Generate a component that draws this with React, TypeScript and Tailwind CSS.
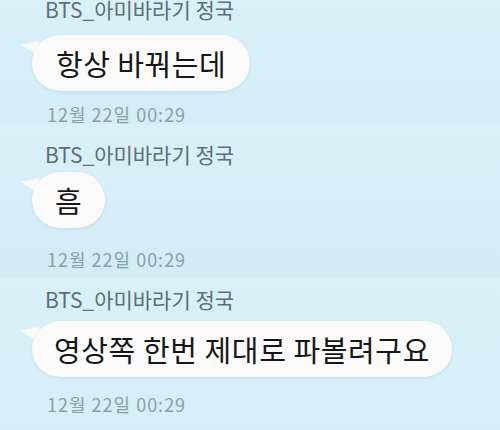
const name = "BTS_아미바라기 정국"
const time = "12월 22일 00:29"

function Bubble({ text, px = "px-[24px]" }: { text: string; px?: string }) {
  return (
    <div className="relative ml-[32px] inline-flex">
      <svg
        className="absolute left-[-13px] top-[6px]"
        width="22"
        height="20"
        viewBox="0 0 22 20"
      >
        <path d="M0 3 C7 4 13 1 20 0 L22 16 C16 13 9 8 0 3 Z" fill="#fafafa" />
      </svg>
      <div
        className={`relative flex h-[56px] items-center rounded-[28px] bg-[#fafafa] ${px} text-[29px] leading-none tracking-[0.5px] text-[#161616] shadow-[0_1px_3px_rgba(60,90,110,0.12)]`}
      >
        {text}
      </div>
    </div>
  )
}

function Name({ className = "" }: { className?: string }) {
  return (
    <div className={`pl-[45px] text-[21px] leading-[26px] text-[#5e6e76] ${className}`}>
      {name}
    </div>
  )
}

function Time({ className = "" }: { className?: string }) {
  return (
    <div className={`pl-[47px] text-[18px] leading-[24px] tracking-[1px] text-[#8d9ea7] ${className}`}>
      {time}
    </div>
  )
}

export default function App() {
  return (
    <div
      className="h-[430px] w-[500px] overflow-hidden bg-[#d4eef7]"
      style={{ fontFamily: '"Noto Sans CJK KR", "Noto Sans", sans-serif' }}
    >
      <section className="h-[128px] bg-gradient-to-b from-[#d9f0f8] to-[#d3edf7]">
        <Name className="mt-[-4px]" />
        <div className="mt-[13px]">
          <Bubble text="항상 바꿔는데" />
        </div>
        <Time className="mt-[11px]" />
      </section>
      <section className="h-[153px] bg-gradient-to-b from-[#d9f0f8] to-[#d2ecf6] pt-[17px]">
        <Name />
        <div className="mt-[5px]">
          <Bubble text="흠" px="px-[23px]" />
        </div>
        <Time className="mt-[19px]" />
      </section>
      <section className="h-[149px] bg-gradient-to-b from-[#d8f0f8] to-[#d5eff8] pt-[9px]">
        <Name />
        <div className="mt-[9px]">
          <Bubble text="영상쪽 한번 제대로 파볼려구요" px="px-[22px] tracking-[0.6px]" />
        </div>
        <Time className="mt-[15px]" />
      </section>
    </div>
  )
}
